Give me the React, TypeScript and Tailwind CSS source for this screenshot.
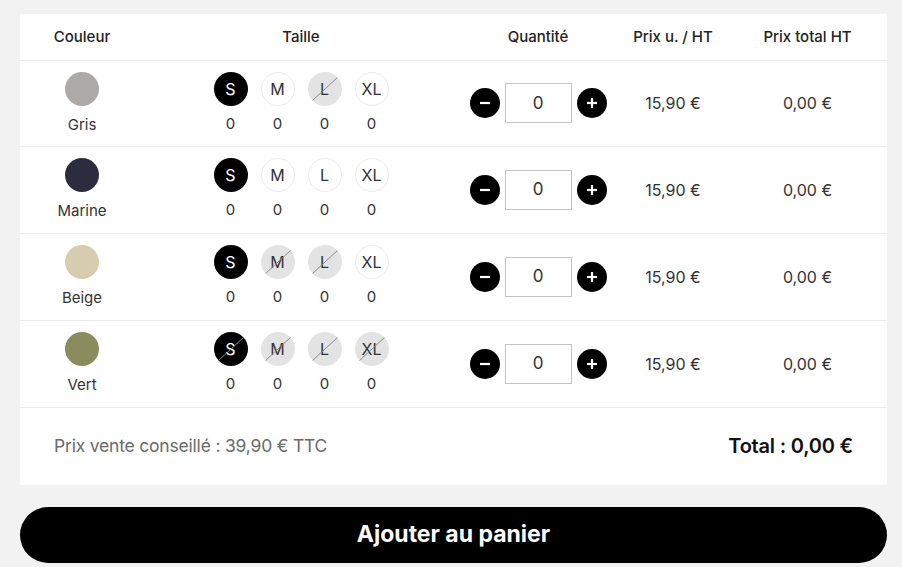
import React from 'react';

type Size = { label: string; disabled?: boolean; selected?: boolean };

const rows: { name: string; color: string; sizes: Size[] }[] = [
  {
    name: 'Gris',
    color: 'bg-[#aca9a9]',
    sizes: [{ label: 'S', selected: true }, { label: 'M' }, { label: 'L', disabled: true }, { label: 'XL' }],
  },
  {
    name: 'Marine',
    color: 'bg-[#2c2c3e]',
    sizes: [{ label: 'S', selected: true }, { label: 'M' }, { label: 'L' }, { label: 'XL' }],
  },
  {
    name: 'Beige',
    color: 'bg-[#d6cdb0]',
    sizes: [
      { label: 'S', selected: true },
      { label: 'M', disabled: true },
      { label: 'L', disabled: true },
      { label: 'XL' },
    ],
  },
  {
    name: 'Vert',
    color: 'bg-[#8b8c5e]',
    sizes: [
      { label: 'S', selected: true, disabled: true },
      { label: 'M', disabled: true },
      { label: 'L', disabled: true },
      { label: 'XL', disabled: true },
    ],
  },
];

const cols = 'grid grid-cols-[124px_314px_160px_110px_1fr]';

const SizeBubble = ({ size }: { size: Size }) => {
  const base = 'relative flex h-[34px] w-[34px] items-center justify-center rounded-full text-[16px] overflow-hidden';
  const look = size.selected
    ? 'bg-black text-white'
    : size.disabled
      ? 'bg-[#e3e3e3] text-[#333]'
      : 'bg-white text-[#333] border border-[#ececec]';

  return (
    <div className="flex flex-col items-center gap-[10px]">
      <div className={`${base} ${look}`}>
        <span>{size.label}</span>
        {size.disabled && (
          <svg className="absolute inset-0" width="34" height="34" viewBox="0 0 34 34">
            <line x1="4" y1="29" x2="30" y2="5" stroke="#8a8a8a" strokeWidth="1" />
          </svg>
        )}
      </div>
      <span className="text-[15px] leading-none text-[#333]">0</span>
    </div>
  );
};

const RoundButton = ({ sign }: { sign: '-' | '+' }) => (
  <button className="flex h-[30px] w-[30px] items-center justify-center rounded-full bg-black">
    <svg width="14" height="14" viewBox="0 0 14 14">
      <line x1="2" y1="7" x2="12" y2="7" stroke="white" strokeWidth="2.2" />
      {sign === '+' && <line x1="7" y1="2" x2="7" y2="12" stroke="white" strokeWidth="2.2" />}
    </svg>
  </button>
);

const App = () => {
  return (
    <div
      className="min-h-[567px] bg-[#f2f2f2] pl-[20px] pr-[15px] pt-[14px] text-[#222]"
      style={{ fontFamily: 'Inter, "Noto Sans", sans-serif' }}
    >
      <section className="bg-white">
        <div className={`${cols} h-[46.5px] items-center border-b border-[#ececec] text-[15px] font-medium text-[#222]`}>
          <div className="text-center">Couleur</div>
          <div className="text-center">Taille</div>
          <div className="text-center">Quantité</div>
          <div className="text-center">Prix u. / HT</div>
          <div className="text-center">Prix total HT</div>
        </div>

        {rows.map((row) => (
          <div key={row.name} className={`${cols} h-[86.75px] items-start border-b border-[#ececec]`}>
            <div className="flex flex-col items-center gap-[11px] pt-[11px]">
              <div className={`h-[34px] w-[34px] rounded-full ${row.color}`} />
              <span className="text-[15px] leading-none text-[#333]">{row.name}</span>
            </div>

            <div className="flex justify-center gap-[13px] pt-[11px]">
              {row.sizes.map((size) => (
                <SizeBubble key={size.label} size={size} />
              ))}
            </div>

            <div className="flex items-center justify-center gap-[5px] self-center">
              <RoundButton sign="-" />
              <div className="flex h-[40px] w-[67px] items-center justify-center border border-[#c4c4c4] text-[17px] text-[#333]">
                0
              </div>
              <RoundButton sign="+" />
            </div>

            <div className="self-center text-center text-[16px] text-[#333]">15,90 €</div>
            <div className="self-center text-center text-[16px] text-[#333]">0,00 €</div>
          </div>
        ))}

        <div className="flex h-[77px] items-center justify-between pl-[34px] pr-[34px]">
          <span className="text-[17.5px] tracking-[-0.2px] text-[#6b6b6b]">Prix vente conseillé : 39,90 € TTC</span>
          <span className="text-[20px] font-semibold tracking-[-0.2px] text-[#111]">Total : 0,00 €</span>
        </div>
      </section>

      <button className="mt-[22px] flex h-[56px] w-full items-center justify-center rounded-full bg-black text-[23px] font-bold text-white">
        Ajouter au panier
      </button>
    </div>
  );
};

export default App;
